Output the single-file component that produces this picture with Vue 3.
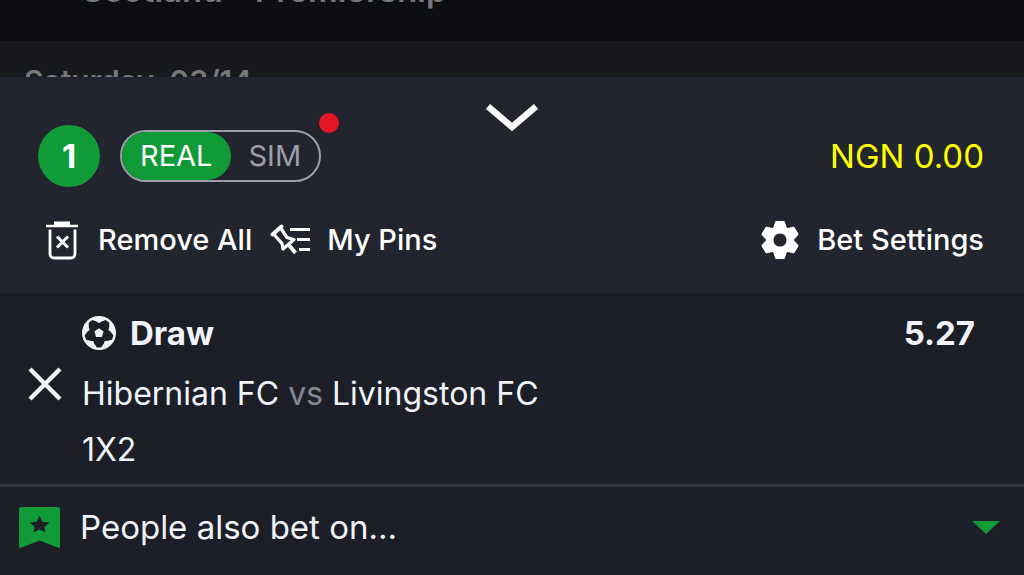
<script setup>
import { ref } from 'vue'

const mode = ref('real')
const stake = 'NGN 0.00'
const bet = {
  pick: 'Draw',
  odds: '5.27',
  home: 'Hibernian FC',
  away: 'Livingston FC',
  market: '1X2'
}
const ballAngles = [0, 72, 144, 216, 288]
const gearAngles = [0, 60, 120, 180, 240, 300]
</script>

<template>
  <main class="app">
    <div class="backdrop">
      <div class="league">Scotland - Premiership</div>
      <div class="date">Saturday, 03/14</div>
    </div>

    <section class="slip">
      <header class="head">
        <button class="collapse" type="button" aria-label="Collapse betslip">
          <svg width="52" height="28" viewBox="0 0 52 28">
            <path d="M2 2.500L26 23L50 2.500" fill="none" stroke="#fff" stroke-width="6.500" />
          </svg>
        </button>
        <div class="row">
          <div class="group">
            <span class="count">1</span>
            <div class="toggle">
              <label :class="{ on: mode === 'real' }">
                <input v-model="mode" type="radio" name="mode" value="real" />REAL
              </label>
              <label :class="{ on: mode === 'sim' }">
                <input v-model="mode" type="radio" name="mode" value="sim" />SIM
              </label>
              <i class="dot"></i>
            </div>
          </div>
          <span class="stake">{{ stake }}</span>
        </div>
        <div class="row actions">
          <div class="group links">
            <button type="button">
              <svg class="trash" width="34" height="40" viewBox="0 0 34 40" fill="none" stroke="#fff">
                <path d="M9 3.500H25" stroke-width="4" />
                <path d="M1 6H33" stroke-width="2.500" />
                <path d="M5 9.500V33.500Q5 38 9.500 38H25.500Q30 38 30 33.500V9.500" stroke-width="2.800" />
                <path d="M12 16.500L23 27.500M23 16.500L12 27.500" stroke-width="3" />
              </svg>
              Remove All
            </button>
            <button type="button">
              <svg width="40" height="32" viewBox="0 0 40 32" fill="none" stroke="#fff">
                <path d="M2.500 10.500L11.500 2.500" stroke-width="4" stroke-linecap="round" />
                <path d="M4 10.500L12 19.500L13 25L24 15.500L17 13.500L11 4.500" stroke-width="3.200" stroke-linejoin="round" />
                <path d="M18 20L25.500 29" stroke-width="3.800" />
                <path d="M20 5.500H40M27 15.500H40M29 25.500H40" stroke-width="3" />
              </svg>
              My Pins
            </button>
          </div>
          <button type="button" class="settings">
            <svg width="40" height="40" viewBox="-20 -20 40 40">
              <g fill="#fff">
                <path v-for="a in gearAngles" :key="a" :transform="`rotate(${a})`" d="M-7 -11.500L-4.900 -18Q-4.600 -19 -3.600 -19H3.600Q4.600 -19 4.900 -18L7 -11.500Z" />
              </g>
              <circle r="10.300" fill="none" stroke="#fff" stroke-width="7.400" />
            </svg>
            Bet Settings
          </button>
        </div>
      </header>

      <article class="bet">
        <button class="remove" type="button" aria-label="Remove selection">
          <svg width="34" height="34" viewBox="0 0 34 34">
            <path d="M2 2L32 32M32 2L2 32" stroke="#f1f3fa" stroke-width="4.400" />
          </svg>
        </button>
        <div class="info">
          <div class="row pick">
            <div class="group name">
              <svg width="34" height="34" viewBox="-17 -17 34 34">
                <circle r="15.700" fill="none" stroke="#f1f3fa" stroke-width="2.500" />
                <g fill="#f1f3fa">
                  <path v-for="a in ballAngles" :key="a" :transform="`rotate(${a})`" d="M-8 -14.500Q0 -18 8 -14.500L5 -12.200Q2.500 -12 0 -9.800Q-2.500 -12 -5 -12.200Z" />
                  <path d="M0 -4.800L4.600 -1.500L2.900 3.900H-2.900L-4.600 -1.500Z" />
                </g>
              </svg>
              <strong>{{ bet.pick }}</strong>
            </div>
            <strong>{{ bet.odds }}</strong>
          </div>
          <div class="match">{{ bet.home }} <span>vs</span> {{ bet.away }}</div>
          <div class="market">{{ bet.market }}</div>
        </div>
      </article>

      <button class="also" type="button">
        <svg width="41" height="41" viewBox="0 0 41 41">
          <path fill="#109a38" d="M2 0H39Q41 0 41 2V39.500Q41 41.500 39 40.700L20.500 33.500L2 40.700Q0 41.500 0 39.500V2Q0 0 2 0Z" />
          <path fill="#1c1f27" d="M20.500 8.500L23.400 14.700L30.500 15.500L25.200 19.900L26.800 25.500L20.500 22.500L14.200 25.500L15.800 19.900L10.500 15.500L17.600 14.700Z" />
        </svg>
        <span>People also bet on...</span>
        <svg class="caret" width="28" height="13" viewBox="0 0 28 13">
          <path fill="#109a38" d="M0 0H28L14 13Z" />
        </svg>
      </button>
    </section>
  </main>
</template>

<style>
body {
  background: #1c1f27;
}
</style>

<style scoped>
.app {
  min-height: 100vh;
  display: flex;
  flex-direction: column;
  overflow: hidden;
  font-family: Inter, "Liberation Sans", sans-serif;
  color: #f1f3fa;
}
button {
  display: flex;
  align-items: center;
  padding: 0;
  border: 0;
  background: none;
  color: inherit;
  font: inherit;
  cursor: pointer;
}
svg {
  display: block;
  flex: none;
}
.backdrop {
  height: 77px;
  overflow: hidden;
  background: #18191c;
  color: #77787b;
  font-size: 30px;
  font-weight: 600;
}
.league {
  height: 71px;
  margin-top: -30px;
  padding-left: 82px;
  background: #0d0e12;
  font-size: 33px;
  line-height: 40px;
}
.date {
  padding: 22px 24px 0;
  line-height: 36px;
}
.slip {
  flex: 1;
  display: flex;
  flex-direction: column;
  background: #1c1f27;
}
.head {
  position: relative;
  padding: 48px 40px 33px 38px;
  background: #23252e;
  color: #fff;
}
.collapse {
  position: absolute;
  top: 27px;
  left: 50%;
  transform: translateX(-50%);
}
.row {
  display: flex;
  align-items: center;
  justify-content: space-between;
}
.group {
  display: flex;
  align-items: center;
  gap: 20px;
}
.count {
  width: 62px;
  height: 62px;
  border-radius: 50%;
  background: #109a38;
  font-size: 33px;
  font-weight: 700;
  line-height: 63px;
  text-align: center;
}
.toggle {
  position: relative;
  display: flex;
  border: 2px solid #9c9eaa;
  border-radius: 26px;
  font-size: 29px;
  line-height: 48px;
  color: #9c9eaa;
}
.toggle label {
  padding: 0 18px;
  border-radius: 24px;
  cursor: pointer;
}
.toggle .on {
  background: #109a38;
  color: #fff;
}
.toggle input {
  position: absolute;
  opacity: 0;
  margin: 0;
}
.dot {
  position: absolute;
  top: -19px;
  right: -20px;
  width: 20px;
  height: 20px;
  border-radius: 50%;
  background: #e61624;
}
.stake {
  font-size: 33px;
  color: #ff0;
}
.actions {
  margin-top: 33px;
  font-size: 29px;
  font-weight: 500;
  line-height: 40px;
}
.links {
  gap: 18px;
  padding-left: 7px;
}
.links button,
.settings {
  gap: 17px;
}
.trash {
  margin-right: 2px;
}
.bet {
  display: flex;
  padding: 20px 49px 6px 28px;
  border-bottom: 3px solid #32353d;
}
.remove {
  margin-right: 20px;
  margin-bottom: 24px;
}
.info {
  flex: 1;
  font-size: 32px;
}
.pick {
  font-size: 33px;
  line-height: 40px;
}
.name {
  gap: 14px;
}
.match {
  margin-top: 13px;
  line-height: 56px;
}
.match span {
  color: #868894;
}
.market {
  line-height: 56px;
}
.also {
  gap: 20px;
  padding: 15px 24px 22px 19px;
  font-size: 33px;
  line-height: 50px;
}
.also span {
  flex: 1;
  text-align: left;
}
</style>
